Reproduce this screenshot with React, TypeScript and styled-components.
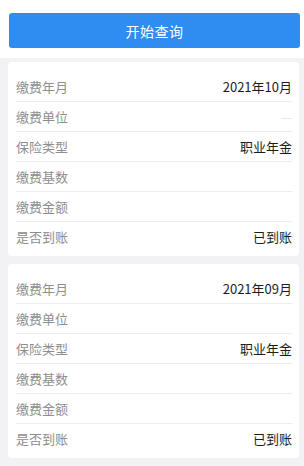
import styled, { createGlobalStyle } from 'styled-components';

interface IRecord {
    month: string
    unit: string
    type: string
    base: string
    amount: string
    status: string
}

const records: IRecord[] = [
    { month: '2021年10月', unit: '—', type: '职业年金', base: '', amount: '', status: '已到账' },
    { month: '2021年09月', unit: '', type: '职业年金', base: '', amount: '', status: '已到账' },
]

const GlobalStyle = createGlobalStyle`
  html, body {
    margin: 0;
    padding: 0;
    background: #f2f2f4;
    font-family: "Noto Sans CJK SC", "Noto Sans", sans-serif;
  }
`

const App = () => {
    return <Page>
        <GlobalStyle />
        <Top>
            <QueryButton>开始查询</QueryButton>
        </Top>
        <List>
            {records.map((r) => <RecordCard key={r.month} record={r} />)}
        </List>
    </Page>
}

const RecordCard = ({ record }: { record: IRecord }) => {
    const rows: [string, string][] = [
        ['缴费年月', record.month],
        ['缴费单位', record.unit],
        ['保险类型', record.type],
        ['缴费基数', record.base],
        ['缴费金额', record.amount],
        ['是否到账', record.status],
    ]
    return <Card>
        {rows.map(([label, value]) => <Row key={label}>
            <Label>{label}</Label>
            <Value $faint={value === '—'}>{value}</Value>
        </Row>)}
    </Card>
}

const Page = styled.div`
  width: 304px;
  min-height: 466px;
  background: #f2f2f4;
`

const Top = styled.div`
  background: #fff;
  padding: 13px 4px 10px 9px;
`

const QueryButton = styled.button`
  display: block;
  width: 100%;
  height: 35px;
  border: none;
  border-radius: 3px;
  background: #2f8cf0;
  color: #fff;
  font-family: inherit;
  font-size: 14px;
  letter-spacing: 0.5px;
`

const List = styled.div`
  display: flex;
  flex-direction: column;
  gap: 8px;
  padding: 4px 5px 0 8px;
`

const Card = styled.div`
  background: #fff;
  border-radius: 4px;
  padding: 10px 7px 5px 8px;
`

const Row = styled.div`
  height: 29px;
  display: flex;
  align-items: center;
  justify-content: space-between;
  border-bottom: 1px solid #ececec;

  &:last-child {
    border-bottom: none;
  }
`

const Label = styled.span`
  font-size: 13px;
  color: #8e8e8e;
`

const Value = styled.span<{ $faint?: boolean }>`
  font-size: 13px;
  color: ${(props) => props.$faint ? '#e6e6e6' : '#1c1c1c'};
`

export default App
